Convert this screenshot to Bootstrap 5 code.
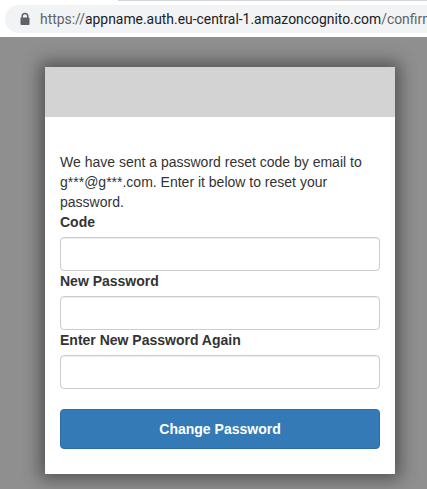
<!DOCTYPE html>
<html lang="en">
<head>
<meta charset="utf-8">
<title>Change Password</title>
<link href="https://cdn.jsdelivr.net/npm/bootstrap@5.3.0/dist/css/bootstrap.min.css" rel="stylesheet">
<style>
html,body{height:489px;overflow:hidden}
body{background:#8f8f8f;font-family:"Liberation Sans",Arial,sans-serif;font-size:14px;line-height:20px;color:#333}
.chrome-bar{height:37px;background:#fff;padding:5px 0 4px 5px;overflow:hidden}
.tab-edge{height:1px;margin:-5px 0 4px 113px;background:#d4d6d9}
.omnibox{height:28px;background:#f1f3f4;border-radius:14px 0 0 14px;padding-left:14px;gap:9px;white-space:nowrap;font-family:Roboto,sans-serif;font-size:13.9px;color:#202124}
.omnibox svg{flex:none}
.url-dim{color:#5f6368}
.stage{padding:30px 32px 0 45px}
.reset-card{width:350px;height:407px;background:#fff;border:0;border-radius:0;box-shadow:0 0 16px 5px rgba(0,0,0,.42);--bs-card-bg:#fff}
.reset-head{height:50px;background:#d3d3d3}
.reset-body{padding:35px 15px 0}
.reset-body p{margin:0}
.reset-body label{display:block;font-weight:700;margin:0 0 5px}
.reset-input{display:block;height:34px;margin-bottom:0;border:1px solid #ccc;border-radius:4px;box-shadow:inset 0 1px 1px rgba(0,0,0,.075)}
.reset-btn{height:40px;margin-top:20px;background:#337ab7;border:1px solid #2e6da4;border-radius:4px;color:#fff;font-weight:700;font-size:14px;padding:0}
.reset-btn:hover{background:#286090;color:#fff}
</style>
</head>
<body>
<div class="chrome-bar">
  <div class="tab-edge"></div>
  <div class="omnibox d-flex align-items-center">
    <svg width="12" height="14" viewBox="0 0 12 14" aria-hidden="true"><path d="M3.2 6V4.2a2.8 2.8 0 0 1 5.6 0V6" fill="none" stroke="#5f6368" stroke-width="1.5"/><rect x="1.5" y="5.5" width="9" height="7.5" rx="1" fill="#5f6368"/></svg>
    <span><span class="url-dim">https://</span>appname.auth.eu-central-1.amazoncognito.com<span class="url-dim">/confirmForgotPassword</span></span>
  </div>
</div>
<div class="stage">
  <div class="card reset-card">
    <div class="reset-head"></div>
    <form class="reset-body">
      <p>We have sent a password reset code by email to g***@g***.com. Enter it below to reset your password.</p>
      <label for="code">Code</label>
      <input id="code" type="text" class="form-control reset-input">
      <label for="pw1">New Password</label>
      <input id="pw1" type="password" class="form-control reset-input">
      <label for="pw2">Enter New Password Again</label>
      <input id="pw2" type="password" class="form-control reset-input">
      <button type="button" class="btn w-100 reset-btn">Change Password</button>
    </form>
  </div>
</div>
<script src="https://cdn.jsdelivr.net/npm/bootstrap@5.3.0/dist/js/bootstrap.bundle.min.js"></script>
</body>
</html>
